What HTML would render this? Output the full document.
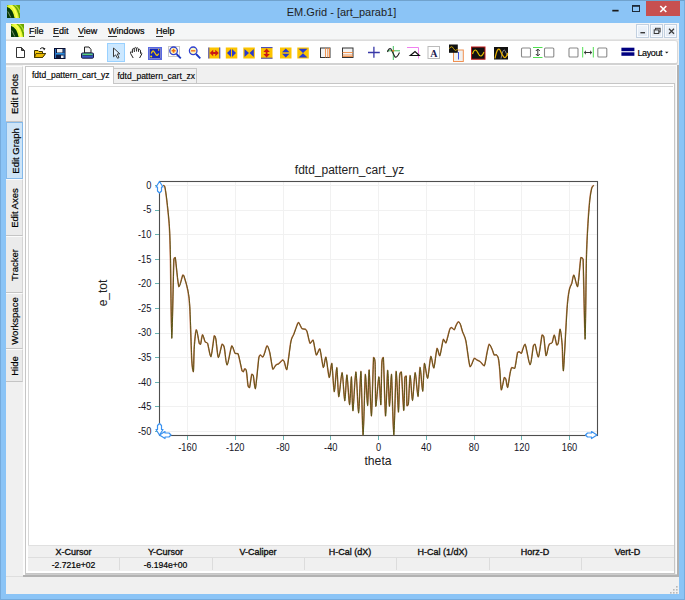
<!DOCTYPE html>
<html><head><meta charset="utf-8">
<style>
*{margin:0;padding:0;box-sizing:border-box}
html,body{width:685px;height:600px;overflow:hidden;background:#8bc4f6;font-family:"Liberation Sans",sans-serif;color:#000}
.a{position:absolute}
#frame{left:0;top:0;width:685px;height:600px;background:#8bc4f6;border:1px solid #76abdc;border-top-color:#70a2cd}
#client{left:6px;top:23px;width:673px;height:571px;background:#f0f0f0}
.title{left:-1px;top:6px;width:685px;text-align:center;font-size:11px;line-height:13px;color:#1e1e1e}
#menubar{left:6px;top:23px;width:673px;height:17px;background:#f5f6f7;border-bottom:1px solid #e6e6e6}
.mi{top:26px;font-size:9px;line-height:10px;color:#000;-webkit-text-stroke:0.2px #000}
.mi u{text-decoration:none;border-bottom:1px solid #333}
#toolbar{left:6px;top:40px;width:672px;height:25px;background:#fff;border:1px solid #d8d8d8;border-left:none;border-top:1px solid #dcdcdc;border-bottom:2px solid #d2d2d2;border-radius:0 3px 3px 0}
.vt{position:absolute;left:6px;width:17px;background:#ebebeb;border-right:1px solid #d5d5d5;border-bottom:1px solid #c4c4c4;border-top:1px solid #fbfbfb}
.vt span{position:absolute;left:50%;top:50%;transform:translate(-50%,-50%) rotate(-90deg);white-space:nowrap;font-size:9.5px;line-height:11px;color:#000;-webkit-text-stroke:0.2px #000}
.mb{position:absolute;top:24px;width:13px;height:14px;background:linear-gradient(#eef4fa,#e2eaf4);border:1px solid #c2d0e0;box-shadow:inset 0 0 0 1px #f8fbff}
.hdr{position:absolute;top:546px;height:12px;font-size:9px;font-weight:normal;-webkit-text-stroke:0.35px #111;line-height:12px;text-align:center;color:#111}
.val{position:absolute;top:559px;height:13px;font-size:8.6px;line-height:12px;text-align:center;color:#000;-webkit-text-stroke:0.2px #000}
</style></head><body>
<div class="a" id="frame"></div>
<svg class="a" style="left:0;top:0" width="685" height="23" viewBox="0 0 685 23">
  <defs><linearGradient id="lg" x1="0" y1="0" x2="1" y2="1"><stop offset="0" stop-color="#0a3a0a"/><stop offset="1" stop-color="#7ab800"/></linearGradient></defs>
  <clipPath id="cl"><rect x="0" y="0" width="13" height="13"/></clipPath><g transform="translate(7,5)" clip-path="url(#cl)">
   <rect x="0" y="0" width="13" height="13" fill="#6aa400"/>
   <path d="M0,0 L5.5,0 Q10.5,3.5 12,13 L7.5,13 Q5.5,3.5 0,2 Z" fill="#e8f838"/>
   <path d="M0,0 L2,0 Q0.5,1 0,2 Z" fill="#90c820"/>
   <path d="M7.5,0 Q12,2.5 13,8" stroke="#b0dc30" stroke-width="1.4" fill="none"/>
   <path d="M3.5,0.5 Q8.5,3.5 9.8,13" stroke="#fbff60" stroke-width="1.4" fill="none"/>
   <path d="M0,2 Q5.5,3.5 7.5,13 L0,13 Z" fill="#073a08"/>
   <path d="M0.8,6.5 L3.8,12.5" stroke="#8a9a70" stroke-width="0.9"/>
  </g>
  <rect x="612.3" y="9.8" width="6.3" height="1.7" fill="#1a1a1a"/>
  <rect x="632.5" y="5.5" width="7" height="6" fill="none" stroke="#1e2a38" stroke-width="1"/>
  <rect x="632" y="5" width="8" height="1.8" fill="#1e2a38"/>
  <rect x="646" y="1" width="34" height="15" fill="#c75050"/>
  <path d="M660.3,6 L666.3,12 M666.3,6 L660.3,12" stroke="#fff" stroke-width="1.7"/>
</svg>
<div class="a title">EM.Grid - [art_parab1]</div>
<div class="a" id="client"></div>
<div class="a" id="menubar"></div>
<svg class="a" style="left:11px;top:24px" width="13" height="13" viewBox="0 0 13 13" overflow="hidden">
   <rect x="0" y="0" width="13" height="13" fill="#6aa400"/>
   <path d="M0,0 L5.5,0 Q10.5,3.5 12,13 L7.5,13 Q5.5,3.5 0,2 Z" fill="#e8f838"/>
   <path d="M0,0 L2,0 Q0.5,1 0,2 Z" fill="#90c820"/>
   <path d="M7.5,0 Q12,2.5 13,8" stroke="#b0dc30" stroke-width="1.4" fill="none"/>
   <path d="M3.5,0.5 Q8.5,3.5 9.8,13" stroke="#fbff60" stroke-width="1.4" fill="none"/>
   <path d="M0,2 Q5.5,3.5 7.5,13 L0,13 Z" fill="#073a08"/>
   <path d="M0.8,6.5 L3.8,12.5" stroke="#8a9a70" stroke-width="0.9"/>
</svg>
<div class="a mi" style="left:29px"><u>F</u>ile</div>
<div class="a mi" style="left:53px"><u>E</u>dit</div>
<div class="a mi" style="left:78px"><u>V</u>iew</div>
<div class="a mi" style="left:108px"><u>W</u>indows</div>
<div class="a mi" style="left:156px"><u>H</u>elp</div>
<div class="mb" style="left:636px"><svg width="11" height="12" style="position:absolute;left:0;top:0"><rect x="3.4" y="7" width="4.6" height="1.4" fill="#3a3a3a"/></svg></div>
<div class="mb" style="left:650px"><svg width="11" height="12" style="position:absolute;left:0;top:0"><rect x="4.5" y="3.3" width="4.6" height="3.6" fill="none" stroke="#3a3a3a" stroke-width="1"/><rect x="3.2" y="4.9" width="4.6" height="3.6" fill="#e6eef7" stroke="#3a3a3a" stroke-width="1"/></svg></div>
<div class="mb" style="left:664px"><svg width="11" height="12" style="position:absolute;left:0;top:0"><path d="M4,3.8 L9,8.7 M9,3.8 L4,8.7" stroke="#3a3a3a" stroke-width="1.2"/></svg></div>

<div class="a" id="toolbar"></div>
<div class="a" style="left:107px;top:43px;width:18px;height:19px;background:#cce8ff;border:1px solid #99d1ff"></div>
<svg class="a" style="left:0;top:40px" width="685" height="24" viewBox="0 40 685 24">
 <!-- new doc -->
 <path d="M16.5,47.5 L21.5,47.5 L24.5,50.5 L24.5,57.5 L16.5,57.5 Z" fill="#fff" stroke="#333" stroke-width="1"/>
 <path d="M21.5,47.5 L21.5,50.5 L24.5,50.5" fill="#555" stroke="#333" stroke-width="1"/>
 <!-- open -->
 <path d="M34.5,50.5 L38,50.5 L39,51.5 L42.5,51.5 L42.5,53.5 L45.5,53.5 L42.5,57.5 L34.5,57.5 Z" fill="#f4c810" stroke="#3a3000" stroke-width="1"/>
 <path d="M36,53.5 L45.5,53.5 L42.5,57.5 L34.5,57.5 Z" fill="#e8b800" stroke="#3a3000" stroke-width="0.8"/>
 <path d="M40,49 Q42,46.5 44,48.5" fill="none" stroke="#222" stroke-width="1"/>
 <path d="M43,47.5 L45.5,48.5 L44,50.5Z" fill="#111"/>
 <!-- save -->
 <rect x="54.5" y="48.5" width="10.5" height="10" fill="#111a40" stroke="#0a0f30" stroke-width="1"/>
 <rect x="57" y="49" width="5.5" height="3.5" fill="#f0f0f0"/>
 <rect x="55" y="53" width="9.5" height="1.6" fill="#2a90e0"/>
 <rect x="55" y="49" width="1" height="9" fill="#2a70c0"/><rect x="63.5" y="49" width="1" height="9" fill="#2a70c0"/>
 <rect x="61" y="55.5" width="2.5" height="2.5" fill="#f0f0f0"/>
 <!-- print -->
 <path d="M84.5,47 L89,47 L91,49.5 L91,53 L84.5,53Z" fill="#f4f4f4" stroke="#222" stroke-width="1"/>
 <rect x="81.5" y="53" width="12" height="5.2" rx="1" fill="#3a58c8" stroke="#1a1a40" stroke-width="1"/>
 <rect x="82.5" y="53.6" width="10" height="1.7" fill="#58d078"/>
 <rect x="82.5" y="55.3" width="10" height="0.7" fill="#203060"/>
 <!-- pointer -->
 <path d="M113.5,48 L113.5,56.8 L115.6,54.9 L117.6,58.3 L119,57.5 L117.2,54 L119.8,53.8 Z" fill="#e4f2ff" stroke="#3a3a3a" stroke-width="1" stroke-linejoin="round"/>
 <!-- hand -->
 <path d="M133.2,58 L130.6,53.5 Q130,51.8 131.2,51.6 L132.6,53" fill="none" stroke="#222" stroke-width="1"/>
 <path d="M132.4,52.5 L132.4,49.2 Q133.2,47.8 134.2,49 L134.4,52" fill="none" stroke="#222" stroke-width="1"/>
 <path d="M134.3,49 L134.4,48.2 Q135.3,46.8 136.3,48.1 L136.5,51.5" fill="none" stroke="#222" stroke-width="1"/>
 <path d="M136.4,48.2 Q137.4,47.2 138.3,48.6 L138.5,51.8" fill="none" stroke="#222" stroke-width="1"/>
 <path d="M138.4,49.6 Q139.5,48.8 140.4,50.2 L140.6,53.5 Q141.5,52.5 142,53.6 L139.6,58" fill="none" stroke="#222" stroke-width="1"/>
 <!-- wave box -->
 <rect x="148.5" y="47.5" width="13" height="12" fill="#1428b8" stroke="#5868e0" stroke-width="1"/>
 <rect x="149.6" y="48.6" width="10.8" height="9.8" fill="none" stroke="#a8a8d8" stroke-width="0.7"/>
 <path d="M151.3,53.5 Q152.5,50 153.6,51.2 Q155,53 156.2,55 Q157.5,56 158.6,53.4" fill="none" stroke="#f4c800" stroke-width="1.3"/>
 <circle cx="151.2" cy="56.5" r="1" fill="#f8d800"/><rect x="158.1" y="49" width="1.1" height="1.8" fill="#f4c800"/>
 <!-- zoom in -->
 <rect x="168.5" y="46.5" width="11" height="10" fill="none" stroke="#c8c8c8" stroke-width="1"/>
 <path d="M176.5,54 L180.8,58.3" stroke="#1a38c0" stroke-width="1.8"/>
 <circle cx="173.6" cy="50.8" r="3.8" fill="#fff8c0" stroke="#3040d0" stroke-width="1.3"/>
 <path d="M171.6,50.8 L175.6,50.8 M173.6,48.8 L173.6,52.8" stroke="#f07010" stroke-width="1.6"/>
 <!-- zoom out -->
 <path d="M196,54 L200.3,58.3" stroke="#1a38c0" stroke-width="1.8"/>
 <circle cx="193.2" cy="50.8" r="3.8" fill="#fff8c0" stroke="#3040d0" stroke-width="1.3"/>
 <path d="M191,50.8 L195.4,50.8" stroke="#f08030" stroke-width="1.6"/>
<rect x="208.5" y="47.5" width="11.5" height="11" fill="#fcc400"/><path d="M208.8,47.5 L208.8,58.5 M219.8,47.5 L219.8,58.5" stroke="#3a40c0" stroke-width="1"/><path d="M209.8,53 L213.2,49.8 L213.2,52.1 L215.3,52.1 L215.3,49.8 L218.8,53 L215.3,56.2 L215.3,53.9 L213.2,53.9 L213.2,56.2Z" fill="#c81818"/><rect x="225.8" y="47.5" width="11.5" height="11" fill="#fcc400"/><path d="M227,53 L231,49 L231,57Z M236,53 L232,49 L232,57Z" fill="#2838d0"/><rect x="243.3" y="47.5" width="11.5" height="11" fill="#fcc400"/><path d="M244.5,49 L249,53 L244.5,57Z M253.8,49 L249.5,53 L253.8,57Z" fill="#2838d0"/><rect x="261" y="47.5" width="11.5" height="11" fill="#fcc400"/><path d="M261,47.6 L272.5,47.6 M261,58.2 L272.5,58.2" stroke="#3a40c0" stroke-width="1"/><path d="M266.6,48.6 L269.8,52 L267.5,52 L267.5,54 L269.8,54 L266.6,57.4 L263.4,54 L265.7,54 L265.7,52 L263.4,52Z" fill="#c81818"/><rect x="280" y="47.5" width="11.5" height="11" fill="#fcc400"/><path d="M285.8,48.5 L289.5,52.3 L282,52.3Z M285.8,57.5 L289.5,53.8 L282,53.8Z" fill="#2838d0"/><rect x="297.3" y="47.5" width="11.5" height="11" fill="#fcc400"/><path d="M298.5,48.8 L307.5,48.8 L303,53Z M298.5,57.5 L307.5,57.5 L303,53.2Z" fill="#2838d0"/>
 <!-- grid icons -->
 <rect x="320.5" y="48" width="9.5" height="9.5" fill="#f4f4f4" stroke="#333" stroke-width="1"/>
 <path d="M325.5,48 L325.5,57.5 M327.8,48 L327.8,57.5 M329.5,48 L329.5,57.5" stroke="#f08a40" stroke-width="0.9"/>
 <rect x="342.5" y="48" width="10.5" height="9.5" fill="#f4f4f4" stroke="#333" stroke-width="1"/>
 <path d="M342.5,52.5 L353,52.5 M342.5,55 L353,55 M342.5,56.5 L353,56.5" stroke="#f08a40" stroke-width="0.9"/>
 <!-- plus -->
 <path d="M368,52.5 L379.8,52.5 M373.9,46.8 L373.9,57.8" stroke="#3838a8" stroke-width="1.3"/>
 <!-- green cross wave -->
 <path d="M393.3,46 L393.3,60 M387,50.8 L400,50.8" stroke="#40c060" stroke-width="1"/>
 <path d="M387.5,52 Q389,47.5 391,49 L395,57 Q397,58 399.5,52.5" fill="none" stroke="#222" stroke-width="1.1"/>
 <circle cx="393.3" cy="50.8" r="1" fill="#f08020"/>
 <!-- triangle -->
 <path d="M407,47.5 L418.5,47.5 L418.5,58.5" fill="none" stroke="#f080f0" stroke-width="1"/>
 <path d="M410.3,55.5 L415,51.5 L419.3,55.5Z" fill="none" stroke="#111" stroke-width="1.2"/>
 <!-- A box -->
 <rect x="428" y="46.5" width="11.5" height="12" fill="#fff" stroke="#bbb" stroke-width="1"/>
 <text x="433.8" y="56.5" font-family="Liberation Serif" font-weight="bold" font-size="10" fill="#202050" text-anchor="middle">A</text>
 <!-- black wave + orange box -->
 <rect x="453.5" y="50" width="9.8" height="11.5" fill="#f0f0f0" stroke="#f09050" stroke-width="1"/>
 <path d="M458.5,52 L458.5,59.5" stroke="#4050e0" stroke-width="1"/>
 <rect x="449" y="44.5" width="8.8" height="8.3" fill="#111"/>
 <path d="M449.5,48.5 Q451.5,45 453.5,48.5 Q455.5,52 457.5,49" fill="none" stroke="#e0b000" stroke-width="1"/>
 <!-- red box wave -->
 <rect x="471.5" y="47" width="13.5" height="12.2" fill="#111" stroke="#c01818" stroke-width="1"/>
 <path d="M472.5,54 Q475,46.5 478,53 Q481,59.5 484,52" fill="none" stroke="#e8c000" stroke-width="1.1"/>
 <!-- black double wave -->
 <rect x="494" y="47" width="14" height="12.5" fill="#111"/>
 <path d="M501,58.5 Q503,47.5 505,50.5 Q506,53 507.8,56" fill="none" stroke="#8a8a8a" stroke-width="0.9"/>
 <path d="M495,58.5 Q497.5,46 500,50 Q502,55 504,57.3 Q506,58.5 507.8,53" fill="none" stroke="#e8b000" stroke-width="1.2"/>
 <!-- boxes and arrows -->
 <rect x="521.5" y="48" width="9" height="9" rx="1" fill="#fff" stroke="#8a8a8a" stroke-width="1.1"/>
 <rect x="544.5" y="48" width="9.3" height="9" rx="1" fill="#fff" stroke="#8a8a8a" stroke-width="1.1"/>
 <path d="M533,47.5 L542.5,47.5 M533,57.5 L542.5,57.5" stroke="#50e050" stroke-width="1"/>
 <path d="M537.8,49.5 L537.8,55.5" stroke="#333" stroke-width="1"/>
 <path d="M535.8,51 L537.8,49 L539.8,51 M535.8,54 L537.8,56 L539.8,54" fill="none" stroke="#333" stroke-width="1"/>
 <rect x="569" y="48" width="9" height="9" rx="1" fill="#fff" stroke="#8a8a8a" stroke-width="1.1"/>
 <rect x="597.8" y="48" width="9" height="9" rx="1" fill="#fff" stroke="#8a8a8a" stroke-width="1.1"/>
 <path d="M582.7,47 L582.7,57.5 M593.3,47 L593.3,57.5" stroke="#50e050" stroke-width="1"/>
 <path d="M584.5,52.5 L591.5,52.5 M586,50.8 L584.2,52.5 L586,54.2 M590,50.8 L591.8,52.5 L590,54.2" fill="none" stroke="#333" stroke-width="1"/>
 <!-- layout -->
 <rect x="621.4" y="47.7" width="13" height="3.5" fill="#000080"/>
 <rect x="621.4" y="52.3" width="13" height="3.5" fill="#000080"/>
 <path d="M665,51.8 L668.5,51.8 L666.75,53.6Z" fill="#222"/>
</svg>
<div class="a" style="left:637.5px;top:47.5px;font-size:9px;letter-spacing:-0.4px;line-height:10px;color:#000;-webkit-text-stroke:0.15px #000">Layout</div>


<!-- vertical tabs -->
<div class="vt" style="top:66px;height:56px"><span>Edit Plots</span></div>
<div class="vt" style="top:122px;height:57px;background:#cde4f7;border:1px solid #84b9ea"><span>Edit Graph</span></div>
<div class="vt" style="top:179px;height:57px"><span>Edit Axes</span></div>
<div class="vt" style="top:236px;height:57px"><span>Tracker</span></div>
<div class="vt" style="top:293px;height:56px"><span>Workspace</span></div>
<div class="vt" style="top:349px;height:33px"><span>Hide</span></div>

<!-- tab page -->
<div class="a" style="left:6px;top:576px;width:17px;height:1px;background:#dedede"></div>
<div class="a" style="left:23px;top:65px;width:656px;height:512px;background:#b2b2b2"></div>
<div class="a" style="left:23px;top:65px;width:654px;height:510px;background:#fcfcfc"></div>
<div class="a" style="left:25px;top:66px;width:651px;height:508px;background:#f0f0f0"></div>
<div class="a" style="left:25px;top:83px;width:650px;height:491px;background:#fff;border:1px solid #c6c6c6"></div>
<div class="a" style="left:25px;top:574px;width:652px;height:1px;background:#cdcdcd"></div>
<div class="a" style="left:28px;top:86px;width:645px;height:1px;background:#d8d8d8"></div>
<div class="a" style="left:28px;top:86px;width:1px;height:459px;background:#d8d8d8"></div>
<!-- tabs -->
<div class="a" style="left:113px;top:68px;width:84px;height:15px;background:#f0f0f0;border:1px solid #c8c8c8;border-bottom:none;font-size:8.5px;line-height:15px;padding-left:3.5px;color:#000;-webkit-text-stroke:0.15px #000;white-space:nowrap">fdtd_pattern_cart_zx</div>
<div class="a" style="left:25px;top:66px;width:89px;height:18px;background:#fff;border:1px solid #c8c8c8;border-bottom:none;font-size:8.5px;line-height:16px;padding-left:6px;color:#000;-webkit-text-stroke:0.15px #000;white-space:nowrap">fdtd_pattern_cart_yz</div>

<!-- status grid -->
<div class="a" style="left:28px;top:545px;width:646px;height:26px;background:#f0f0f0;border-top:1px solid #e0e0e0"></div>
<div class="a" style="left:28px;top:557px;width:646px;height:1px;background:#dedede"></div>
<div class="hdr" style="left:28px;width:91px">X-Cursor</div><div class="val" style="left:28px;width:91px">-2.721e+02</div><div class="hdr" style="left:119px;width:93px">Y-Cursor</div><div class="val" style="left:119px;width:93px">-6.194e+00</div><div class="hdr" style="left:212px;width:92px">V-Caliper</div><div class="val" style="left:212px;width:92px"></div><div class="hdr" style="left:304px;width:92px">H-Cal (dX)</div><div class="val" style="left:304px;width:92px"></div><div class="hdr" style="left:396px;width:93px">H-Cal (1/dX)</div><div class="val" style="left:396px;width:93px"></div><div class="hdr" style="left:489px;width:92px">Horz-D</div><div class="val" style="left:489px;width:92px"></div><div class="hdr" style="left:581px;width:93px">Vert-D</div><div class="val" style="left:581px;width:93px"></div><div class="a" style="left:119px;top:558px;width:1px;height:12px;background:#dcdcdc"></div><div class="a" style="left:212px;top:558px;width:1px;height:12px;background:#dcdcdc"></div><div class="a" style="left:304px;top:558px;width:1px;height:12px;background:#dcdcdc"></div><div class="a" style="left:396px;top:558px;width:1px;height:12px;background:#dcdcdc"></div><div class="a" style="left:489px;top:558px;width:1px;height:12px;background:#dcdcdc"></div><div class="a" style="left:581px;top:558px;width:1px;height:12px;background:#dcdcdc"></div><svg class="a" style="left:668px;top:584px" width="11" height="10"><rect x="8" y="2" width="1.6" height="1.6" fill="#b8b8b8"/><rect x="5" y="5" width="1.6" height="1.6" fill="#b8b8b8"/><rect x="8" y="5" width="1.6" height="1.6" fill="#b8b8b8"/><rect x="2" y="8" width="1.6" height="1.6" fill="#b8b8b8"/><rect x="5" y="8" width="1.6" height="1.6" fill="#b8b8b8"/><rect x="8" y="8" width="1.6" height="1.6" fill="#b8b8b8"/></svg>

<!-- plot -->
<svg class="a" style="left:0;top:0" width="685" height="600" viewBox="0 0 685 600">
 <g stroke="#f1f1f1" stroke-width="1"><line x1="187.5" y1="182" x2="187.5" y2="435" /><line x1="235.5" y1="182" x2="235.5" y2="435" /><line x1="283.5" y1="182" x2="283.5" y2="435" /><line x1="330.5" y1="182" x2="330.5" y2="435" /><line x1="378.5" y1="182" x2="378.5" y2="435" /><line x1="426.5" y1="182" x2="426.5" y2="435" /><line x1="474.5" y1="182" x2="474.5" y2="435" /><line x1="521.5" y1="182" x2="521.5" y2="435" /><line x1="569.5" y1="182" x2="569.5" y2="435" /><line x1="160" y1="185.5" x2="597" y2="185.5" /><line x1="160" y1="210.5" x2="597" y2="210.5" /><line x1="160" y1="234.5" x2="597" y2="234.5" /><line x1="160" y1="259.5" x2="597" y2="259.5" /><line x1="160" y1="283.5" x2="597" y2="283.5" /><line x1="160" y1="308.5" x2="597" y2="308.5" /><line x1="160" y1="333.5" x2="597" y2="333.5" /><line x1="160" y1="357.5" x2="597" y2="357.5" /><line x1="160" y1="382.5" x2="597" y2="382.5" /><line x1="160" y1="406.5" x2="597" y2="406.5" /><line x1="160" y1="431.5" x2="597" y2="431.5" /></g>
 <g stroke="#6ab4b4" stroke-width="1"><line x1="187.5" y1="436" x2="187.5" y2="440" /><line x1="235.5" y1="436" x2="235.5" y2="440" /><line x1="283.5" y1="436" x2="283.5" y2="440" /><line x1="330.5" y1="436" x2="330.5" y2="440" /><line x1="378.5" y1="436" x2="378.5" y2="440" /><line x1="426.5" y1="436" x2="426.5" y2="440" /><line x1="474.5" y1="436" x2="474.5" y2="440" /><line x1="521.5" y1="436" x2="521.5" y2="440" /><line x1="569.5" y1="436" x2="569.5" y2="440" /><line x1="155" y1="185.5" x2="159" y2="185.5" /><line x1="155" y1="210.5" x2="159" y2="210.5" /><line x1="155" y1="234.5" x2="159" y2="234.5" /><line x1="155" y1="259.5" x2="159" y2="259.5" /><line x1="155" y1="283.5" x2="159" y2="283.5" /><line x1="155" y1="308.5" x2="159" y2="308.5" /><line x1="155" y1="333.5" x2="159" y2="333.5" /><line x1="155" y1="357.5" x2="159" y2="357.5" /><line x1="155" y1="382.5" x2="159" y2="382.5" /><line x1="155" y1="406.5" x2="159" y2="406.5" /><line x1="155" y1="431.5" x2="159" y2="431.5" /></g>
 <rect x="159.5" y="181.5" width="438" height="254" fill="none" stroke="#4e4e4e" stroke-width="1.1"/>
 <path d="M163.10,185.10 C163.33,185.33 164.19,185.10 164.70,186.70 C165.21,188.83 166.04,194.29 166.70,200.00 C167.36,205.71 168.77,218.13 169.30,226.70 C169.83,235.27 170.06,244.06 170.40,260.00 C170.74,275.94 171.21,338.30 171.70,338.30 C172.19,338.19 173.30,270.74 173.80,259.20 C174.30,257.50 174.49,257.50 175.20,257.50 C175.91,261.43 177.73,284.20 178.80,286.70 C179.87,286.70 181.99,276.56 182.70,275.00 C183.41,275.00 183.09,275.00 183.80,275.80 C184.51,277.94 186.86,285.59 187.70,290.00 C188.54,294.41 189.13,296.70 189.70,306.70 C190.27,316.70 191.19,350.71 191.70,360.00 C192.21,369.29 192.94,371.70 193.30,371.70 C193.66,369.80 193.77,352.70 194.20,346.70 C194.63,340.70 195.59,330.19 196.30,329.70 C197.01,329.70 198.60,341.23 199.20,343.30 C199.80,344.20 200.03,344.20 200.50,344.20 C200.97,342.97 201.86,335.06 202.50,334.70 C203.14,334.70 204.29,340.47 205.00,341.70 C205.71,342.93 206.67,341.70 207.50,343.30 C208.33,345.44 209.84,356.70 210.80,356.70 C211.76,355.63 213.49,338.30 214.20,335.80 C214.91,335.80 215.21,336.10 215.80,339.20 C216.39,342.30 217.41,356.79 218.30,357.50 C219.19,357.50 221.16,345.63 222.00,344.20 C222.84,344.20 223.49,344.53 224.20,347.50 C224.91,350.47 225.93,365.00 227.00,365.00 C228.07,364.76 230.56,347.47 231.70,345.80 C232.84,345.80 234.10,352.17 235.00,353.30 C235.90,353.70 237.00,353.30 238.00,353.70 C239.00,356.20 241.24,368.23 242.00,370.80 C242.76,371.70 242.91,371.70 243.30,371.70 C243.69,371.40 244.27,368.83 244.70,368.70 C245.13,368.70 245.83,368.70 246.30,370.80 C246.77,373.24 247.54,383.41 248.00,385.80 C248.46,387.50 248.97,387.50 249.50,387.50 C250.03,385.84 251.16,375.87 251.70,374.20 C252.24,374.20 252.79,374.20 253.30,375.80 C253.81,377.87 254.51,388.70 255.30,388.70 C256.09,386.09 258.09,362.31 258.80,357.50 C259.51,355.00 259.73,355.07 260.30,355.00 C260.87,355.00 262.17,357.00 262.80,357.00 C263.43,356.64 264.10,354.10 264.70,352.50 C265.30,350.90 266.29,345.80 267.00,345.80 C267.71,345.80 268.87,349.16 269.70,352.50 C270.53,355.84 271.93,367.41 272.80,369.20 C273.67,369.20 274.96,365.79 275.80,365.00 C276.64,364.21 277.74,364.41 278.70,363.70 C279.66,362.99 281.71,360.29 282.50,360.00 C283.29,360.00 283.60,360.31 284.20,361.70 C284.80,363.09 285.76,369.70 286.70,369.70 C287.64,366.84 289.80,346.77 290.80,341.70 C291.80,336.63 292.74,336.77 293.70,334.20 C294.66,331.63 296.79,325.37 297.50,323.70 C298.21,322.50 298.06,322.50 298.70,322.50 C299.34,323.21 301.06,327.74 302.00,328.70 C302.94,329.20 304.59,328.77 305.30,329.20 C306.01,329.63 306.33,329.69 307.00,331.70 C307.67,333.71 309.14,342.11 310.00,343.30 C310.86,343.30 312.10,340.00 313.00,340.00 C313.90,341.67 315.34,353.76 316.30,355.00 C317.26,355.00 318.70,348.70 319.70,348.70 C320.70,350.49 322.43,366.31 323.30,367.50 C324.17,367.50 324.96,357.00 325.80,357.00 C326.64,358.43 328.36,376.60 329.20,377.50 C330.04,377.50 330.99,363.30 331.70,363.30 C332.41,365.33 333.49,391.10 334.20,391.70 C334.91,391.70 336.06,367.50 336.70,367.50 C337.34,368.21 337.94,395.99 338.70,396.70 C339.46,396.70 341.14,372.50 342.00,372.50 C342.86,373.09 344.01,400.47 344.70,400.80 C345.39,400.80 346.11,374.80 346.80,374.80 C347.49,375.37 348.86,404.53 349.50,404.80 C350.14,404.80 350.83,376.70 351.30,376.70 C351.77,377.56 352.16,410.80 352.80,410.80 C353.44,410.10 354.99,371.80 355.80,371.80 C356.61,372.11 357.79,413.00 358.50,413.00 C359.21,412.93 360.16,371.30 360.80,371.30 C361.44,374.44 362.36,434.57 363.00,435.00 C363.64,435.00 364.66,378.50 365.30,374.30 C365.94,374.30 366.97,405.60 367.50,405.60 C368.03,404.96 368.46,369.80 369.00,369.80 C369.54,371.29 370.66,416.00 371.30,416.00 C371.94,414.24 372.97,365.10 373.50,357.50 C374.03,357.50 374.67,357.50 375.00,362.80 C375.33,369.77 375.26,404.31 375.80,406.30 C376.34,406.30 378.10,376.91 378.80,376.70 C379.50,376.70 380.27,404.80 380.70,404.80 C381.13,402.74 381.43,369.06 381.80,362.30 C382.17,357.50 382.77,357.50 383.30,357.50 C383.83,365.17 384.89,414.19 385.50,416.00 C386.11,416.00 387.04,371.59 387.60,370.20 C388.16,370.20 388.86,405.73 389.40,406.30 C389.94,406.30 390.79,374.20 391.40,374.20 C392.01,378.30 393.03,435.00 393.70,435.00 C394.37,434.59 395.43,374.57 396.10,371.30 C396.77,371.30 397.90,411.51 398.40,412.10 C398.90,412.10 399.19,381.14 399.60,375.40 C400.01,371.90 400.71,371.90 401.30,371.90 C401.89,376.90 403.20,409.64 403.70,410.40 C404.20,410.40 404.44,382.11 404.80,377.20 C405.16,376.00 405.90,376.00 406.20,376.00 C406.50,380.07 406.60,401.70 406.90,405.70 C407.20,405.70 407.84,405.70 408.30,404.00 C408.76,399.67 409.51,375.90 410.10,375.40 C410.69,375.40 411.69,400.50 412.40,400.50 C413.11,400.09 414.31,373.09 415.10,372.50 C415.89,372.50 417.20,396.40 417.90,396.40 C418.60,395.64 419.33,367.94 420.00,367.20 C420.67,367.20 421.97,391.20 422.60,391.20 C423.23,390.63 423.70,365.04 424.40,363.20 C425.10,363.20 426.59,378.30 427.50,378.30 C428.41,377.31 429.91,357.77 430.80,356.30 C431.69,356.30 432.81,368.00 433.70,368.00 C434.59,366.86 436.14,350.04 437.00,348.30 C437.86,348.30 438.80,355.80 439.70,355.80 C440.60,354.50 442.43,341.03 443.30,339.20 C444.17,339.20 444.89,343.00 445.80,343.00 C446.71,341.57 448.91,331.41 449.70,329.20 C450.49,327.50 450.66,327.50 451.30,327.50 C451.94,327.57 453.56,329.70 454.20,329.70 C454.84,329.46 455.21,326.94 455.80,325.80 C456.39,324.66 457.66,321.93 458.30,321.70 C458.94,321.70 459.70,322.77 460.30,324.20 C460.90,325.63 461.71,329.33 462.50,331.70 C463.29,334.07 464.73,335.80 465.80,340.80 C466.87,345.80 468.80,364.20 470.00,366.70 C471.20,366.70 473.20,359.26 474.20,358.30 C475.20,358.30 476.13,359.51 477.00,360.00 C477.87,360.49 479.27,360.87 480.30,361.70 C481.33,362.53 483.24,365.80 484.20,365.80 C485.16,364.49 486.29,355.59 487.00,352.50 C487.71,349.41 488.49,344.67 489.20,344.20 C489.91,344.20 491.29,347.66 492.00,349.20 C492.71,350.74 493.59,354.21 494.20,355.00 C494.81,355.00 495.71,354.70 496.30,354.70 C496.89,355.17 497.81,356.11 498.30,358.30 C498.79,360.49 499.27,365.47 499.70,370.00 C500.13,374.53 500.66,388.93 501.30,390.00 C501.94,390.00 503.56,379.04 504.20,377.50 C504.84,377.50 505.33,377.77 505.80,379.20 C506.27,380.63 506.90,387.50 507.50,387.50 C508.10,386.66 509.40,376.16 510.00,373.30 C510.60,370.44 511.03,368.21 511.70,367.50 C512.37,367.50 513.87,368.30 514.70,368.30 C515.53,366.16 516.86,354.87 517.50,352.50 C518.14,351.70 518.66,351.70 519.20,351.70 C519.74,351.81 520.47,353.30 521.30,353.30 C522.13,352.23 523.76,344.20 525.00,344.20 C526.24,345.83 528.81,364.47 530.00,364.70 C531.19,364.70 532.59,348.73 533.30,345.80 C534.01,344.20 534.29,344.20 535.00,344.20 C535.71,345.80 537.30,357.00 538.30,357.00 C539.30,355.69 541.23,337.90 542.00,335.00 C542.77,335.00 543.13,335.00 543.70,336.70 C544.27,339.67 545.34,354.37 546.00,355.80 C546.66,355.80 547.79,348.42 548.30,346.70 C548.81,344.98 549.06,344.35 549.60,343.75 C550.14,343.15 551.44,343.75 552.10,342.50 C552.76,341.25 553.54,335.00 554.20,335.00 C554.86,335.36 556.11,343.93 556.70,345.00 C557.29,345.00 557.83,344.79 558.30,342.50 C558.77,340.21 559.46,329.00 560.00,329.00 C560.54,329.36 561.63,339.03 562.10,345.00 C562.57,350.97 562.60,370.80 563.30,370.80 C564.00,365.56 566.16,319.84 567.00,308.30 C567.84,296.76 568.53,293.57 569.20,290.00 C569.87,286.43 571.04,285.44 571.70,283.30 C572.36,281.16 572.97,275.00 573.80,275.00 C574.63,275.49 576.50,286.70 577.50,286.70 C578.50,284.20 580.01,261.43 580.80,257.50 C581.59,257.50 582.40,257.50 583.00,259.20 C583.60,270.87 584.53,339.09 585.00,339.20 C585.47,339.20 585.91,276.07 586.30,260.00 C586.69,243.93 587.21,235.27 587.70,226.70 C588.19,218.13 589.13,205.53 589.70,200.00 C590.27,194.47 591.13,190.10 591.70,188.00 C592.27,185.90 593.41,185.69 593.70,185.30" fill="none" stroke="#c05028" stroke-width="1.45" stroke-linejoin="round" opacity="0.8"/>
 <path d="M163.25,185.20 C163.48,185.43 164.34,185.20 164.85,186.80 C165.36,188.93 166.19,194.39 166.85,200.10 C167.51,205.81 168.92,218.23 169.45,226.80 C169.98,235.37 170.21,244.16 170.55,260.10 C170.89,276.04 171.36,338.40 171.85,338.40 C172.34,338.29 173.45,270.84 173.95,259.30 C174.45,257.60 174.64,257.60 175.35,257.60 C176.06,261.53 177.88,284.30 178.95,286.80 C180.02,286.80 182.14,276.66 182.85,275.10 C183.56,275.10 183.24,275.10 183.95,275.90 C184.66,278.04 187.01,285.69 187.85,290.10 C188.69,294.51 189.28,296.80 189.85,306.80 C190.42,316.80 191.34,350.81 191.85,360.10 C192.36,369.39 193.09,371.80 193.45,371.80 C193.81,369.90 193.92,352.80 194.35,346.80 C194.78,340.80 195.74,330.29 196.45,329.80 C197.16,329.80 198.75,341.33 199.35,343.40 C199.95,344.30 200.18,344.30 200.65,344.30 C201.12,343.07 202.01,335.16 202.65,334.80 C203.29,334.80 204.44,340.57 205.15,341.80 C205.86,343.03 206.82,341.80 207.65,343.40 C208.48,345.54 209.99,356.80 210.95,356.80 C211.91,355.73 213.64,338.40 214.35,335.90 C215.06,335.90 215.36,336.20 215.95,339.30 C216.54,342.40 217.56,356.89 218.45,357.60 C219.34,357.60 221.31,345.73 222.15,344.30 C222.99,344.30 223.64,344.63 224.35,347.60 C225.06,350.57 226.08,365.10 227.15,365.10 C228.22,364.86 230.71,347.57 231.85,345.90 C232.99,345.90 234.25,352.27 235.15,353.40 C236.05,353.80 237.15,353.40 238.15,353.80 C239.15,356.30 241.39,368.33 242.15,370.90 C242.91,371.80 243.06,371.80 243.45,371.80 C243.84,371.50 244.42,368.93 244.85,368.80 C245.28,368.80 245.98,368.80 246.45,370.90 C246.92,373.34 247.69,383.51 248.15,385.90 C248.61,387.60 249.12,387.60 249.65,387.60 C250.18,385.94 251.31,375.97 251.85,374.30 C252.39,374.30 252.94,374.30 253.45,375.90 C253.96,377.97 254.66,388.80 255.45,388.80 C256.24,386.19 258.24,362.41 258.95,357.60 C259.66,355.10 259.88,355.17 260.45,355.10 C261.02,355.10 262.32,357.10 262.95,357.10 C263.58,356.74 264.25,354.20 264.85,352.60 C265.45,351.00 266.44,345.90 267.15,345.90 C267.86,345.90 269.02,349.26 269.85,352.60 C270.68,355.94 272.08,367.51 272.95,369.30 C273.82,369.30 275.11,365.89 275.95,365.10 C276.79,364.31 277.89,364.51 278.85,363.80 C279.81,363.09 281.86,360.39 282.65,360.10 C283.44,360.10 283.75,360.41 284.35,361.80 C284.95,363.19 285.91,369.80 286.85,369.80 C287.79,366.94 289.95,346.87 290.95,341.80 C291.95,336.73 292.89,336.87 293.85,334.30 C294.81,331.73 296.94,325.47 297.65,323.80 C298.36,322.60 298.21,322.60 298.85,322.60 C299.49,323.31 301.21,327.84 302.15,328.80 C303.09,329.30 304.74,328.87 305.45,329.30 C306.16,329.73 306.48,329.79 307.15,331.80 C307.82,333.81 309.29,342.21 310.15,343.40 C311.01,343.40 312.25,340.10 313.15,340.10 C314.05,341.77 315.49,353.86 316.45,355.10 C317.41,355.10 318.85,348.80 319.85,348.80 C320.85,350.59 322.58,366.41 323.45,367.60 C324.32,367.60 325.11,357.10 325.95,357.10 C326.79,358.53 328.51,376.70 329.35,377.60 C330.19,377.60 331.14,363.40 331.85,363.40 C332.56,365.43 333.64,391.20 334.35,391.80 C335.06,391.80 336.21,367.60 336.85,367.60 C337.49,368.31 338.09,396.09 338.85,396.80 C339.61,396.80 341.29,372.60 342.15,372.60 C343.01,373.19 344.16,400.57 344.85,400.90 C345.54,400.90 346.26,374.90 346.95,374.90 C347.64,375.47 349.01,404.63 349.65,404.90 C350.29,404.90 350.98,376.80 351.45,376.80 C351.92,377.66 352.31,410.90 352.95,410.90 C353.59,410.20 355.14,371.90 355.95,371.90 C356.76,372.21 357.94,413.10 358.65,413.10 C359.36,413.03 360.31,371.40 360.95,371.40 C361.59,374.54 362.51,434.67 363.15,435.10 C363.79,435.10 364.81,378.60 365.45,374.40 C366.09,374.40 367.12,405.70 367.65,405.70 C368.18,405.06 368.61,369.90 369.15,369.90 C369.69,371.39 370.81,416.10 371.45,416.10 C372.09,414.34 373.12,365.20 373.65,357.60 C374.18,357.60 374.82,357.60 375.15,362.90 C375.48,369.87 375.41,404.41 375.95,406.40 C376.49,406.40 378.25,377.01 378.95,376.80 C379.65,376.80 380.42,404.90 380.85,404.90 C381.28,402.84 381.58,369.16 381.95,362.40 C382.32,357.60 382.92,357.60 383.45,357.60 C383.98,365.27 385.04,414.29 385.65,416.10 C386.26,416.10 387.19,371.69 387.75,370.30 C388.31,370.30 389.01,405.83 389.55,406.40 C390.09,406.40 390.94,374.30 391.55,374.30 C392.16,378.40 393.18,435.10 393.85,435.10 C394.52,434.69 395.58,374.67 396.25,371.40 C396.92,371.40 398.05,411.61 398.55,412.20 C399.05,412.20 399.34,381.24 399.75,375.50 C400.16,372.00 400.86,372.00 401.45,372.00 C402.04,377.00 403.35,409.74 403.85,410.50 C404.35,410.50 404.59,382.21 404.95,377.30 C405.31,376.10 406.05,376.10 406.35,376.10 C406.65,380.17 406.75,401.80 407.05,405.80 C407.35,405.80 407.99,405.80 408.45,404.10 C408.91,399.77 409.66,376.00 410.25,375.50 C410.84,375.50 411.84,400.60 412.55,400.60 C413.26,400.19 414.46,373.19 415.25,372.60 C416.04,372.60 417.35,396.50 418.05,396.50 C418.75,395.74 419.48,368.04 420.15,367.30 C420.82,367.30 422.12,391.30 422.75,391.30 C423.38,390.73 423.85,365.14 424.55,363.30 C425.25,363.30 426.74,378.40 427.65,378.40 C428.56,377.41 430.06,357.87 430.95,356.40 C431.84,356.40 432.96,368.10 433.85,368.10 C434.74,366.96 436.29,350.14 437.15,348.40 C438.01,348.40 438.95,355.90 439.85,355.90 C440.75,354.60 442.58,341.13 443.45,339.30 C444.32,339.30 445.04,343.10 445.95,343.10 C446.86,341.67 449.06,331.51 449.85,329.30 C450.64,327.60 450.81,327.60 451.45,327.60 C452.09,327.67 453.71,329.80 454.35,329.80 C454.99,329.56 455.36,327.04 455.95,325.90 C456.54,324.76 457.81,322.03 458.45,321.80 C459.09,321.80 459.85,322.87 460.45,324.30 C461.05,325.73 461.86,329.43 462.65,331.80 C463.44,334.17 464.88,335.90 465.95,340.90 C467.02,345.90 468.95,364.30 470.15,366.80 C471.35,366.80 473.35,359.36 474.35,358.40 C475.35,358.40 476.28,359.61 477.15,360.10 C478.02,360.59 479.42,360.97 480.45,361.80 C481.48,362.63 483.39,365.90 484.35,365.90 C485.31,364.59 486.44,355.69 487.15,352.60 C487.86,349.51 488.64,344.77 489.35,344.30 C490.06,344.30 491.44,347.76 492.15,349.30 C492.86,350.84 493.74,354.31 494.35,355.10 C494.96,355.10 495.86,354.80 496.45,354.80 C497.04,355.27 497.96,356.21 498.45,358.40 C498.94,360.59 499.42,365.57 499.85,370.10 C500.28,374.63 500.81,389.03 501.45,390.10 C502.09,390.10 503.71,379.14 504.35,377.60 C504.99,377.60 505.48,377.87 505.95,379.30 C506.42,380.73 507.05,387.60 507.65,387.60 C508.25,386.76 509.55,376.26 510.15,373.40 C510.75,370.54 511.18,368.31 511.85,367.60 C512.52,367.60 514.02,368.40 514.85,368.40 C515.68,366.26 517.01,354.97 517.65,352.60 C518.29,351.80 518.81,351.80 519.35,351.80 C519.89,351.91 520.62,353.40 521.45,353.40 C522.28,352.33 523.91,344.30 525.15,344.30 C526.39,345.93 528.96,364.57 530.15,364.80 C531.34,364.80 532.74,348.83 533.45,345.90 C534.16,344.30 534.44,344.30 535.15,344.30 C535.86,345.90 537.45,357.10 538.45,357.10 C539.45,355.79 541.38,338.00 542.15,335.10 C542.92,335.10 543.28,335.10 543.85,336.80 C544.42,339.77 545.49,354.47 546.15,355.90 C546.81,355.90 547.94,348.52 548.45,346.80 C548.96,345.08 549.21,344.45 549.75,343.85 C550.29,343.25 551.59,343.85 552.25,342.60 C552.91,341.35 553.69,335.10 554.35,335.10 C555.01,335.46 556.26,344.03 556.85,345.10 C557.44,345.10 557.98,344.89 558.45,342.60 C558.92,340.31 559.61,329.10 560.15,329.10 C560.69,329.46 561.78,339.13 562.25,345.10 C562.72,351.07 562.75,370.90 563.45,370.90 C564.15,365.66 566.31,319.94 567.15,308.40 C567.99,296.86 568.68,293.67 569.35,290.10 C570.02,286.53 571.19,285.54 571.85,283.40 C572.51,281.26 573.12,275.10 573.95,275.10 C574.78,275.59 576.65,286.80 577.65,286.80 C578.65,284.30 580.16,261.53 580.95,257.60 C581.74,257.60 582.55,257.60 583.15,259.30 C583.75,270.97 584.68,339.19 585.15,339.30 C585.62,339.30 586.06,276.17 586.45,260.10 C586.84,244.03 587.36,235.37 587.85,226.80 C588.34,218.23 589.28,205.63 589.85,200.10 C590.42,194.57 591.28,190.20 591.85,188.10 C592.42,186.00 593.56,185.79 593.85,185.40" fill="none" stroke="#46520e" stroke-width="0.85" stroke-linejoin="round"/>
 <g font-family="Liberation Sans" font-size="10.8" fill="#15151f" text-anchor="middle"><text transform="translate(187.5,451) scale(0.86,1)">-160</text><text transform="translate(235.2,451) scale(0.86,1)">-120</text><text transform="translate(283.0,451) scale(0.86,1)">-80</text><text transform="translate(330.8,451) scale(0.86,1)">-40</text><text transform="translate(378.5,451) scale(0.86,1)">0</text><text transform="translate(426.2,451) scale(0.86,1)">40</text><text transform="translate(474.0,451) scale(0.86,1)">80</text><text transform="translate(521.8,451) scale(0.86,1)">120</text><text transform="translate(569.5,451) scale(0.86,1)">160</text></g>
 <g font-family="Liberation Sans" font-size="10.8" fill="#15151f" text-anchor="end"><text transform="translate(151.3,188.8) scale(0.86,1)">0</text><text transform="translate(151.3,213.4) scale(0.86,1)">-5</text><text transform="translate(151.3,238.0) scale(0.86,1)">-10</text><text transform="translate(151.3,262.6) scale(0.86,1)">-15</text><text transform="translate(151.3,287.2) scale(0.86,1)">-20</text><text transform="translate(151.3,311.8) scale(0.86,1)">-25</text><text transform="translate(151.3,336.4) scale(0.86,1)">-30</text><text transform="translate(151.3,361.0) scale(0.86,1)">-35</text><text transform="translate(151.3,385.6) scale(0.86,1)">-40</text><text transform="translate(151.3,410.2) scale(0.86,1)">-45</text><text transform="translate(151.3,434.8) scale(0.86,1)">-50</text></g>
 <text x="349.5" y="174.4" font-family="Liberation Sans" font-size="12" fill="#222" text-anchor="middle">fdtd_pattern_cart_yz</text>
 <text x="378" y="465" font-family="Liberation Sans" font-size="12.2" fill="#222" text-anchor="middle">theta</text>
 <text transform="translate(107,293) rotate(-90)" font-family="Liberation Sans" font-size="12" fill="#222" text-anchor="middle">e_tot</text>
 <g fill="#fff" stroke="#3a92f0" stroke-width="1.2" stroke-linejoin="round">
  <path d="M159.5,181.5 L163,187 L161.5,187 L161.5,191 L159.5,193 L157.5,191 L157.5,187 L156,187 Z"/>
  <path d="M159.5,435 L163,429.5 L161.5,429.5 L161.5,425.5 L159.5,423.5 L157.5,425.5 L157.5,429.5 L156,429.5 Z"/>
  <path d="M159.5,435 L165,438.5 L165,437 L169,437 L171,435 L169,433 L165,433 L165,431.5 Z"/>
  <path d="M597,435 L591.5,438.5 L591.5,437 L587.5,437 L585.5,435 L587.5,433 L591.5,433 L591.5,431.5 Z"/>
 </g>
</svg>
</body></html>
